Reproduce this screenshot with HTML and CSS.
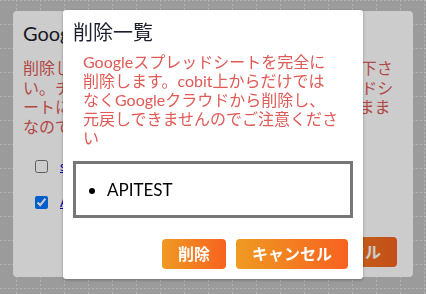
FILE: index.html
```html
<!DOCTYPE html>
<html lang="ja">
<head>
<meta charset="utf-8">
<title>削除一覧</title>
<link rel="stylesheet" href="styles.css">
</head>
<body>
<div class="page">
  <section class="card">
    <h1 class="card-title">Googleスプレッドシート削除</h1>
    <p class="card-note">削除したいGoogleスプレッドシートを選択して下さ<br>い。チェックしたファイルのみGoogleスプレッドシ<br>ートに保存されたデータは全て消えるのでそのまま<br>なので注意してください。</p>
    <ul class="files">
      <li class="file"><input type="checkbox" class="file-check"><a href="#" class="file-link">sample</a></li>
      <li class="file"><input type="checkbox" class="file-check" checked><a href="#" class="file-link">APITEST</a></li>
    </ul>
    <div class="card-actions">
      <button class="btn" type="button">削除</button>
      <button class="btn" type="button">キャンセル</button>
    </div>
  </section>
</div>
<div class="overlay"></div>
<div class="modal" role="dialog">
  <h2 class="modal-title">削除一覧</h2>
  <p class="modal-warning">Googleスプレッドシートを完全に<br>削除します。cobit上からだけでは<br>なくGoogleクラウドから削除し、<br>元戻しできませんのでご注意くださ<br>い</p>
  <div class="modal-list">
    <ul class="delete-list">
      <li>APITEST</li>
    </ul>
  </div>
  <div class="modal-actions">
    <button class="btn" type="button">削除</button>
    <button class="btn" type="button">キャンセル</button>
  </div>
</div>
</body>
</html>
```
FILE: styles.css
```css
html, body {
  margin: 0;
  padding: 0;
}
body {
  width: 426px;
  height: 294px;
  overflow: hidden;
  font-family: "Lato", "Noto Sans CJK JP", sans-serif;
  background-color: #c2c2c2;
  background-image:
    conic-gradient(from 270deg at 2px 1px, #e0e0e0 25%, transparent 0),
    conic-gradient(from 270deg at 1px 2px, #e0e0e0 25%, transparent 0);
  background-size: 4px 24px, 24px 4px;
  background-position: 0 0, 16px 0;
}
.page {
  padding: 11px 13px;
}
.card {
  box-sizing: border-box;
  width: 400px;
  height: 266px;
  background: #fff;
  border-radius: 4px;
  padding: 10px;
  display: flex;
  flex-direction: column;
}
.card-title {
  margin: 0;
  font-size: 20px;
  line-height: 24px;
  font-weight: 400;
  color: #1c1f2e;
  white-space: nowrap;
}
.card-note {
  margin: 13px 0 0;
  font-size: 16px;
  line-height: 19.5px;
  color: #e05a56;
  white-space: nowrap;
}
.files {
  list-style: none;
  margin: 12px 0 0;
  padding: 0 0 0 9px;
}
.file {
  height: 36px;
  display: flex;
  align-items: center;
}
.file-check {
  margin: 0 12px 0 3px;
  width: 13px;
  height: 13px;
}
.file-link {
  color: #0000ee;
  font-size: 13px;
}
.card-actions {
  margin-top: auto;
  display: flex;
  justify-content: flex-end;
  gap: 10px;
  padding-right: 6px;
}
.btn {
  height: 30px;
  padding: 0 16px;
  border: none;
  border-radius: 4px;
  background: linear-gradient(to right, #ef9a22, #f7621f);
  color: #fff;
  font-family: "Lato", "Noto Sans CJK JP", sans-serif;
  font-size: 16px;
  font-weight: 700;
  line-height: 30px;
}
.overlay {
  position: fixed;
  inset: 0;
  background: rgba(0, 0, 0, 0.2);
}
.modal {
  position: absolute;
  top: 10px;
  left: 63px;
  box-sizing: border-box;
  width: 300px;
  height: 269px;
  padding: 10px;
  background: #fff;
  border-radius: 3px;
  box-shadow: 0 1px 3px rgba(0, 0, 0, 0.3);
  display: flex;
  flex-direction: column;
}
.modal-title {
  margin: 0;
  font-size: 20px;
  line-height: 24px;
  font-weight: 400;
  color: #1c1f2e;
}
.modal-warning {
  margin: 8px 0 0 10px;
  font-size: 16px;
  line-height: 19px;
  color: #e05a56;
  white-space: nowrap;
}
.modal-list {
  margin-top: 14px;
  border: 3px solid #777;
}
.delete-list {
  margin: 0;
  padding: 16px 0 16px 31px;
  font-size: 17px;
  line-height: 19px;
  color: #000;
}
.modal-actions {
  margin-top: auto;
  display: flex;
  justify-content: flex-end;
  gap: 10px;
  padding-right: 5px;
}
```
